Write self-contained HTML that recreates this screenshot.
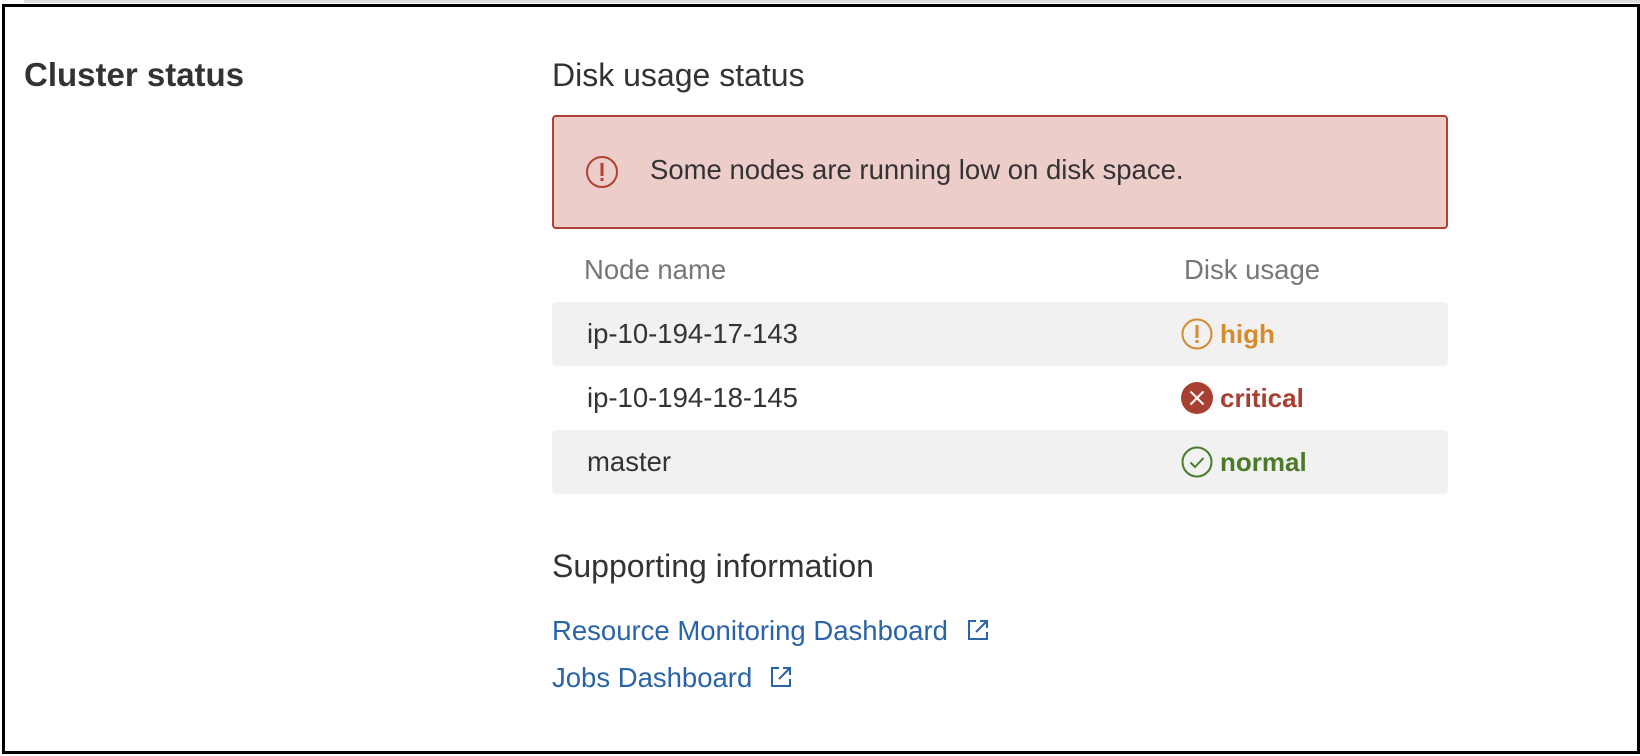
<!DOCTYPE html>
<html><head><meta charset="utf-8"><style>
*{margin:0;padding:0;box-sizing:border-box}
body{width:1640px;height:756px;background:#fff;font-family:"Liberation Sans",Roboto,sans-serif;color:#333;position:relative;overflow:hidden}
.topline{position:absolute;left:24px;top:0;width:1616px;height:3px;background:#ddd}
.frame{position:absolute;left:2px;top:4px;width:1638px;height:750px;border:3px solid #000}
.abs{position:absolute;white-space:nowrap}
.alert{position:absolute;left:552px;top:115px;width:896px;height:114px;background:#edcdca;border:2px solid #b04030;border-radius:4px}
.row{position:absolute;left:552px;width:896px;height:64px;border-radius:4px}
.g{background:#f1f1f1}
.cell{position:absolute;font-size:27.5px;line-height:64px}
.st{position:absolute;left:629px;top:0;height:64px;display:flex;align-items:center;font-size:26px;font-weight:bold}
.st svg{margin-right:7px}
a{color:#2a63a8;text-decoration:none;font-size:27.5px}
</style></head><body>
<div class="topline"></div>
<div class="frame"></div>
<div class="abs" style="left:24px;top:56px;font-size:33px;font-weight:bold;color:#333">Cluster status</div>
<div class="abs" style="left:552px;top:57px;font-size:32px">Disk usage status</div>
<div class="alert">
<svg style="position:absolute;left:31px;top:38px" width="34" height="34" viewBox="0 0 34 34"><circle cx="17" cy="17" r="15" fill="none" stroke="#b04030" stroke-width="2"/><rect x="15.5" y="8" width="3" height="13" fill="#b04030"/><rect x="15.5" y="23" width="3" height="3" fill="#b04030"/></svg>
<div class="abs" style="left:96px;top:37px;font-size:27.5px;color:#333">Some nodes are running low on disk space.</div>
</div>
<div class="abs" style="left:584px;top:254px;font-size:27.5px;color:#777">Node name</div>
<div class="abs" style="left:1184px;top:254px;font-size:27.5px;color:#777">Disk usage</div>
<div class="row g" style="top:302px"><div class="cell" style="left:35px">ip-10-194-17-143</div>
<div class="st" style="color:#d68a2e"><svg width="32" height="32" viewBox="0 0 32 32"><circle cx="16" cy="16" r="14.5" fill="none" stroke="#d68a2e" stroke-width="2"/><rect x="14.5" y="7" width="3" height="13" fill="#d68a2e"/><rect x="14.5" y="22" width="3" height="3" fill="#d68a2e"/></svg>high</div></div>
<div class="row" style="top:366px"><div class="cell" style="left:35px">ip-10-194-18-145</div>
<div class="st" style="color:#a84032"><svg width="32" height="32" viewBox="0 0 32 32"><circle cx="16" cy="16" r="16" fill="#a84032"/><path d="M9.5 9.5L22.5 22.5M22.5 9.5L9.5 22.5" stroke="#fff" stroke-width="2"/></svg>critical</div></div>
<div class="row g" style="top:430px"><div class="cell" style="left:35px">master</div>
<div class="st" style="color:#4a7a2a"><svg width="32" height="32" viewBox="0 0 32 32"><circle cx="16" cy="16" r="14.5" fill="none" stroke="#4a7a2a" stroke-width="2"/><path d="M9.5 16.5L14 21L22.5 12" fill="none" stroke="#4a7a2a" stroke-width="2"/></svg>normal</div></div>
<div class="abs" style="left:552px;top:548px;font-size:32px">Supporting information</div>
<div class="abs" style="left:552px;top:615px"><a>Resource Monitoring Dashboard</a></div>
<svg class="abs" style="left:967px;top:619px" width="22" height="22" viewBox="0 0 22 22"><path d="M9 2H2V20H20V13" fill="none" stroke="#2a63a8" stroke-width="2"/><path d="M13 2H20V9M20 2L9 13" fill="none" stroke="#2a63a8" stroke-width="2"/></svg>
<div class="abs" style="left:552px;top:662px"><a>Jobs Dashboard</a></div>
<svg class="abs" style="left:770px;top:666px" width="22" height="22" viewBox="0 0 22 22"><path d="M9 2H2V20H20V13" fill="none" stroke="#2a63a8" stroke-width="2"/><path d="M13 2H20V9M20 2L9 13" fill="none" stroke="#2a63a8" stroke-width="2"/></svg>
</body></html>
